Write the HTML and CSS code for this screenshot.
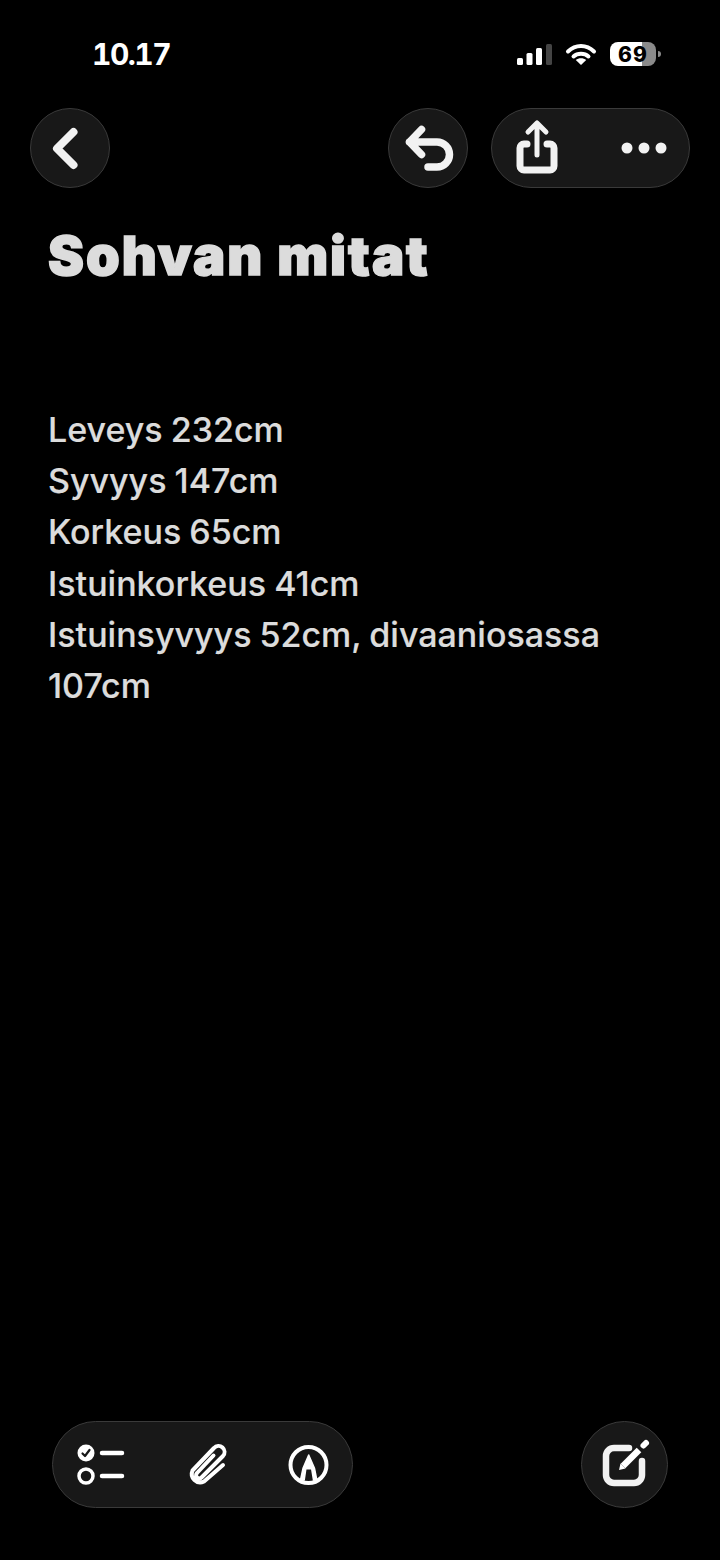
FILE: index.html
```html
<!DOCTYPE html>
<html lang="en">
<head>
    <meta charset="UTF-8">
    <meta name="viewport" content="width=device-width, initial-scale=1.0">
    <title>Sohvan mitat</title>
    <link rel="stylesheet" href="styles.css">
</head>
<body>
    <div class="screen">
        <div class="status-bar">
            <span class="time">10.17</span>
            <div class="status-icons">
                <svg class="signal" width="35" height="21" viewBox="0 0 35 21">
                    <rect x="0" y="14" width="6" height="7" rx="1.5" fill="#fff"/>
                    <rect x="9.500" y="9" width="6" height="12" rx="1.5" fill="#fff"/>
                    <rect x="19" y="4" width="6" height="17" rx="1.5" fill="#fff"/>
                    <rect x="29" y="0" width="6" height="21" rx="1.5" fill="#444"/>
                </svg>
                <svg class="wifi" width="30" height="22" viewBox="0 0 30 22">
                    <path d="M2 8.500C9.500 1.200 20.500 1.200 28 8.500" fill="none" stroke="#fff" stroke-width="4" stroke-linecap="round"/>
                    <path d="M7.500 13.500C11.500 9.800 18.500 9.800 22.500 13.500" fill="none" stroke="#fff" stroke-width="4" stroke-linecap="round"/>
                    <path d="M15 22L9.800 17C12.600 14.600 17.400 14.600 20.200 17Z" fill="#fff"/>
                </svg>
                <div class="battery"><span class="battery-level">69</span></div>
            </div>
        </div>

        <div class="nav-row">
            <button class="round-btn">
                <svg width="80" height="80" viewBox="0 0 80 80">
                    <path d="M43.500 24L27 40.500L43.500 57" class="icon-line" stroke-width="8"/>
                </svg>
            </button>
            <div class="nav-right">
                <button class="round-btn">
                    <svg width="80" height="80" viewBox="0 0 80 80">
                        <path d="M33.500 21.500L21.500 34L33.500 46.500M21.500 34H49A12.500 12.500 0 0 1 49 59H40" class="icon-line" stroke-width="7.500"/>
                    </svg>
                </button>
                <div class="action-pill">
                    <svg width="80" height="80" viewBox="0 0 80 80">
                        <path d="M30 36H27A4 4 0 0 0 23 40V58A4 4 0 0 0 27 62H53A4 4 0 0 0 57 58V40A4 4 0 0 0 53 36H50" class="icon-line" stroke-width="7"/>
                        <path d="M40 47V17M31 24L40 15L49 24" class="icon-line" stroke-width="5"/>
                    </svg>
                    <svg width="80" height="80" viewBox="0 0 80 80">
                        <circle cx="23" cy="40" r="5.500" fill="#f2f2f2"/>
                        <circle cx="40" cy="40" r="5.500" fill="#f2f2f2"/>
                        <circle cx="57" cy="40" r="5.500" fill="#f2f2f2"/>
                    </svg>
                </div>
            </div>
        </div>

        <div class="note">
            <h1>Sohvan mitat</h1>
            <p>Leveys 232cm<br>Syvyys 147cm<br>Korkeus 65cm<br>Istuinkorkeus 41cm<br>Istuinsyvyys 52cm, divaaniosassa 107cm</p>
        </div>

        <div class="toolbar">
            <div class="tool-pill">
                <svg width="48" height="44" viewBox="0 0 48 44">
                    <circle cx="9" cy="10" r="8.500" fill="#fff"/>
                    <path d="M5.500 10.500L8 13L12.500 7" fill="none" stroke="#181818" stroke-width="2.200" stroke-linecap="round" stroke-linejoin="round"/>
                    <circle cx="9" cy="33" r="7" fill="none" stroke="#fff" stroke-width="3.500"/>
                    <path d="M25 10H45M25 33H45" class="tool-line" stroke-width="4.500"/>
                </svg>
                <svg width="39" height="44" viewBox="0 0 39 44">
                    <path d="M36 22L17 38.500A8.500 8.500 0 0 1 5.500 27.500L27 5A6 6 0 0 1 36 13L14.500 34.500A3 3 0 0 1 10 30L26.500 12.500" class="tool-line" stroke-width="4"/>
                </svg>
                <svg width="43" height="44" viewBox="0 0 43 44">
                    <circle cx="20.500" cy="22" r="18" fill="none" stroke="#fff" stroke-width="4"/>
                    <path d="M20.700 12L26.500 25.300L28.800 37H25.500L23.700 25.800H17.800L16.200 37H12.500L15 25.300Z" fill="#fff" stroke="#fff" stroke-width="1.500" stroke-linejoin="round"/>
                </svg>
            </div>
            <button class="compose-btn">
                <svg width="87" height="87" viewBox="0 0 87 87">
                    <path d="M48 27H33A8 8 0 0 0 25 35V54A8 8 0 0 0 33 62H53A8 8 0 0 0 61 54V40" class="icon-line" stroke-width="6.500"/>
                    <path d="M42 45L58 29" fill="none" stroke="#fff" stroke-width="6.500"/>
                    <path d="M38 49L39.500 42.500L44.500 47.500Z" fill="#fff"/>
                    <path d="M62.500 24.500L65 22" class="tool-line" stroke-width="6"/>
                </svg>
            </button>
        </div>
    </div>
</body>
</html>
```

FILE: styles.css
```css
* {
    box-sizing: border-box;
}
body {
    margin: 0;
    background-color: #000;
    font-family: Inter, "Liberation Sans", sans-serif;
}
button {
    padding: 0;
    font: inherit;
    cursor: pointer;
}
svg {
    display: block;
    overflow: visible;
}
.screen {
    display: flex;
    flex-direction: column;
    height: 1560px;
    overflow: hidden;
}
.status-bar {
    display: flex;
    justify-content: space-between;
    align-items: center;
    height: 108px;
    padding: 0 60px 0 92px;
}
.time {
    color: #fff;
    font-size: 30px;
    font-weight: 700;
    font-variant-numeric: tabular-nums;
    letter-spacing: -1.5px;
}
.status-icons {
    display: flex;
    align-items: center;
    gap: 14px;
}
.battery {
    position: relative;
    display: flex;
    justify-content: center;
    align-items: center;
    width: 46px;
    height: 24px;
    margin-right: 4px;
    border-radius: 8px;
    background: linear-gradient(to right, #fff 69%, #8a8a8a 69%);
}
.battery::after {
    content: "";
    position: absolute;
    right: -5px;
    top: 9px;
    width: 3px;
    height: 6px;
    border-radius: 0 3px 3px 0;
    background-color: #8a8a8a;
}
.battery-level {
    color: #000;
    font-size: 21px;
    font-weight: 800;
    letter-spacing: 1px;
}
.nav-row {
    display: flex;
    justify-content: space-between;
    padding: 0 30px;
}
.nav-right {
    display: flex;
    gap: 23px;
}
.round-btn {
    display: flex;
    justify-content: center;
    align-items: center;
    width: 80px;
    height: 80px;
    border: 1px solid #3a3a3a;
    border-radius: 50%;
    background-color: #181818;
}
.action-pill {
    display: flex;
    justify-content: space-between;
    align-items: center;
    width: 199px;
    height: 80px;
    padding: 0 5px;
    border: 1px solid #3a3a3a;
    border-radius: 40px;
    background-color: #181818;
}
.icon-line {
    fill: none;
    stroke: #f2f2f2;
    stroke-linecap: round;
    stroke-linejoin: round;
}
.tool-line {
    fill: none;
    stroke: #fff;
    stroke-linecap: round;
    stroke-linejoin: round;
}
.note {
    padding: 34px 48px 0;
    color: #dcdcdc;
}
.note h1 {
    margin: 0 0 114px;
    font-size: 54px;
    font-weight: 900;
    line-height: 68px;
    letter-spacing: 2px;
    -webkit-text-stroke: 1.5px #dcdcdc;
}
.note p {
    margin: 0;
    font-size: 34px;
    font-weight: 500;
    line-height: 51.2px;
    word-spacing: -1px;
    -webkit-text-stroke: 0.2px #dcdcdc;
}
.toolbar {
    display: flex;
    justify-content: space-between;
    align-items: center;
    margin-top: auto;
    padding: 0 52px 52px;
}
.tool-pill {
    display: flex;
    align-items: center;
    gap: 62px;
    width: 301px;
    height: 87px;
    padding-left: 24px;
    border: 1px solid #3a3a3a;
    border-radius: 44px;
    background-color: #181818;
}
.compose-btn {
    display: flex;
    justify-content: center;
    align-items: center;
    width: 87px;
    height: 87px;
    border: 1px solid #3a3a3a;
    border-radius: 50%;
    background-color: #181818;
}
```
